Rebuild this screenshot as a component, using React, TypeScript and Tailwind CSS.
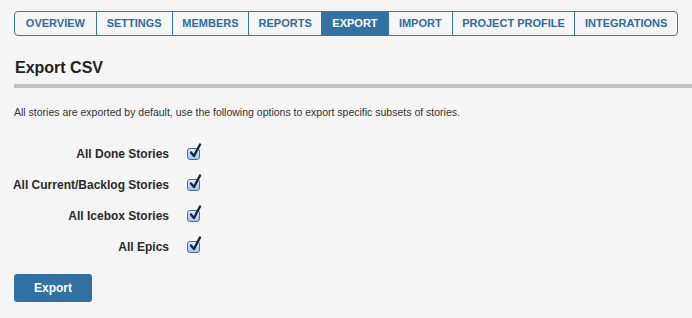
import React from "react";

const tabs = [
  { label: "OVERVIEW", w: "w-[81px]" },
  { label: "SETTINGS", w: "w-[76px]" },
  { label: "MEMBERS", w: "w-[77px]" },
  { label: "REPORTS", w: "w-[73px]" },
  { label: "EXPORT", w: "w-[67px]", active: true },
  { label: "IMPORT", w: "w-[64px]" },
  { label: "PROJECT PROFILE", w: "w-[123px]" },
  { label: "INTEGRATIONS", w: "w-[103px]" },
];

const options = [
  "All Done Stories",
  "All Current/Backlog Stories",
  "All Icebox Stories",
  "All Epics",
];

function Check() {
  return (
    <span className="relative inline-block w-[13px] h-[12px] rounded-[3px] border border-[#56698c] bg-gradient-to-b from-[#dcebfd] to-[#9fc6f1]">
      <svg
        className="absolute left-[1px] top-[-6px]"
        width="13"
        height="16"
        viewBox="0 0 13 16"
        fill="none"
      >
        <path
          d="M2 9.5 L5 13 L11 1.5"
          stroke="#15243f"
          strokeWidth="2.4"
          strokeLinecap="round"
          strokeLinejoin="round"
        />
      </svg>
    </span>
  );
}

export default function App() {
  return (
    <div className="min-h-screen bg-[#f5f5f5] pt-[11px] pl-[14px] font-['Liberation_Sans',Arial,sans-serif] text-[#333]">
      {/* Tabs */}
      <div className="flex w-[664px] h-[25px] border border-[#3b74a7] rounded-[4px] overflow-hidden">
        {tabs.map((t, i) => (
          <div
            key={t.label}
            className={
              t.w +
              " flex items-center justify-center text-[11px] font-bold " +
              (i > 0 ? "border-l border-[#3b74a7] " : "") +
              (t.active ? "bg-[#3371a2] text-white" : "text-[#2f6ba1]")
            }
          >
            {t.label}
          </div>
        ))}
      </div>

      {/* Titre */}
      <div className="mt-[22px] pb-[6px] border-b-4 border-[#c3c3c3]">
        <h1 className="pl-px text-[16px] leading-[20px] font-bold text-[#222]">Export CSV</h1>
      </div>

      <p className="mt-[17px] text-[10.5px] leading-[14px] text-[#333]">
        All stories are exported by default, use the following options to export specific subsets of stories.
      </p>

      {/* Options */}
      <div className="mt-[19px]">
        {options.map((o) => (
          <div key={o} className="flex items-center h-[31px]">
            <div className="w-[155px] whitespace-nowrap flex justify-end text-[12px] font-bold text-[#2a2a2a]">
              {o}
            </div>
            <div className="ml-[18px] flex items-center">
              <Check />
            </div>
          </div>
        ))}
      </div>

      <button className="mt-[12px] w-[78px] h-[28px] rounded-[3px] bg-[#3371a2] text-white text-[12px] font-bold">
        Export
      </button>
    </div>
  );
}
